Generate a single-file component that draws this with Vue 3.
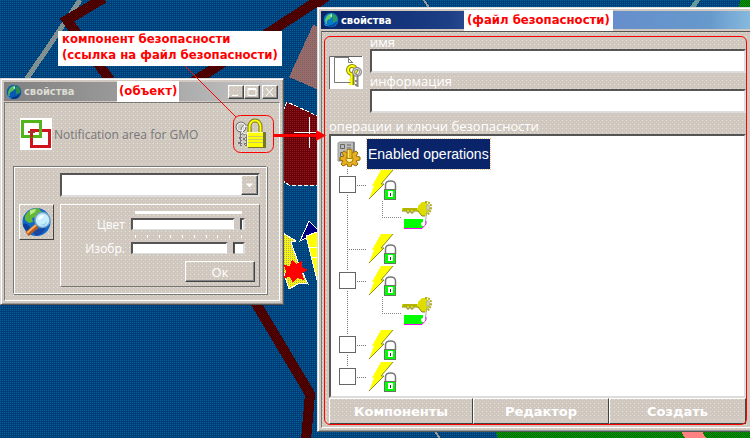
<script setup>
import { ref } from 'vue'

const color = ref(99)
const picture = ref(92)
const name = ref('')
const info = ref('')
const rows = [
  { check: true, child: true },
  { check: false, child: false },
  { check: true, child: true },
  { check: true, child: false },
  { check: true, child: false },
]
const ticks = 10
</script>

<template>
  <main class="desktop">
    <svg class="wallpaper" viewBox="0 0 750 438" preserveAspectRatio="xMinYMin slice" aria-hidden="true">
      <defs>
        <pattern id="p-red" width="2" height="2" patternUnits="userSpaceOnUse">
          <rect width="2" height="2" fill="#6c0008" /><rect width="1" height="1" fill="#8c2020" />
        </pattern>
        <pattern id="p-maroon" width="2" height="2" patternUnits="userSpaceOnUse">
          <rect width="2" height="2" fill="#330000" /><rect width="1" height="1" fill="#660000" /><rect x="1" y="1" width="1" height="1" fill="#660000" />
        </pattern>
        <pattern id="p-pink" width="2" height="2" patternUnits="userSpaceOnUse">
          <rect width="2" height="2" fill="#996c6c" /><rect width="1" height="1" fill="#806060" />
        </pattern>
        <pattern id="p-grey" width="2" height="2" patternUnits="userSpaceOnUse">
          <rect width="2" height="2" fill="#8c9494" /><rect width="1" height="1" fill="#669999" /><rect x="1" y="1" width="1" height="1" fill="#808080" />
        </pattern>
        <pattern id="p-green" width="2" height="2" patternUnits="userSpaceOnUse">
          <rect width="2" height="2" fill="#009900" /><rect width="1" height="1" fill="#006600" /><rect x="1" y="1" width="1" height="1" fill="#006600" />
        </pattern>
        <pattern id="p-yellow" width="2" height="2" patternUnits="userSpaceOnUse">
          <rect width="2" height="2" fill="#f4f410" /><rect width="1" height="1" fill="#b0b060" />
        </pattern>
      </defs>
      <g shape-rendering="crispEdges">
        <path d="M80 0 26 80" stroke="url(#p-grey)" stroke-width="5" fill="none" />
        <path d="M104 -2 67 20 110 80M322 -2 190 84M254 300 310 394 306 440" stroke="url(#p-maroon)" stroke-width="10" fill="none" />
        <path d="M313 25 330 30V95L289 77z" fill="url(#p-pink)" />
        <path d="M283 111 287 102 320 117V185H289L283 181z" fill="url(#p-red)" />
        <path d="M283 111 287 102 320 117M320 185H289L283 181" fill="none" stroke="#fff" stroke-dasharray="4 2" />
        <path d="M309 117V148M294 132H318" stroke="#fff" fill="none" />
        <path d="M317 0H330L320 7H317z" fill="url(#p-maroon)" />
        <path d="M424 0 429 8M434 430 441 440" stroke="#999" stroke-width="2" />
        <path d="M690 7 695 0H700L696 7z" fill="#669999" />
        <path d="M738 8 741 0H750V8zM495 430H750V438H498z" fill="url(#p-green)" />
        <path d="M680 430H701L706 438H685z" fill="#ff8080" />
        <path d="M283 233 296 241 291 242 299 265 308 284 300 283 289 289 283 270z" fill="url(#p-yellow)" stroke="#fff" />
        <path d="M300 241 309 221 320 232V237L306 238 300 241z" fill="#000080" stroke="#fff" />
        <path d="M306 236 320 231V280H317z" fill="#ff0" stroke="#fff" />
        <path d="M309 247H317M311 257H317" stroke="#fff" />
        <path d="M284 265 290 266 292 260 296 264 302 261 302 267 308 270 302 273 304 280 297 278 293 283 290 277 284 278 286 272z" fill="#f00" />
      </g>
    </svg>

    <section class="window object-window" aria-label="свойства объекта">
      <header class="title inactive">
        <svg class="globe" viewBox="0 0 16 16" aria-hidden="true">
          <circle cx="8" cy="8" r="7.3" fill="#0858b0" /><path d="M2 9c1-5 3-7 8-8-3 2 0 3-2 5s-3 1-4 3 1 3-1 3z" fill="#5b5" /><path d="M10 2c4 1 5 4 4 7-2 0-3 2-4 1s1-2 0-3-1-3 0-5z" fill="#2a8a50" /><path d="M3 13c4 1 8 0 11-4-1 5-6 8-11 4z" fill="#003080" /><path d="M1 13 4 8 2 14 7 13z" fill="#39d" /><path d="M7 4l2-2v3z" fill="#cef" />
        </svg>
        <h2>свойства</h2>
        <div class="caption-buttons">
          <button type="button" aria-label="Свернуть"><svg viewBox="0 0 14 12"><path d="M3 9.500H9" /></svg></button>
          <button type="button" aria-label="Развернуть"><svg viewBox="0 0 14 12"><path d="M3 2.500H11V9.500H3zM3 3.500H11" /></svg></button>
          <button type="button" class="close" aria-label="Закрыть"><svg viewBox="0 0 14 12"><path d="M3 2 10 10M10 2 3 10" /></svg></button>
        </div>
      </header>
      <div class="object-body">
        <div class="object-head">
          <svg class="squares" viewBox="0 0 32 32" aria-hidden="true">
            <rect width="32" height="32" fill="#fff" /><rect x="11.500" y="12.500" width="18" height="16" fill="none" stroke="#d1121d" stroke-width="3" /><rect x="2.500" y="3.500" width="18" height="15" fill="none" stroke="#53b51c" stroke-width="3" /><path d="M11.500 12V19.500" stroke="#b52418" stroke-width="3" /><path d="M8 14H15" stroke="#a33" stroke-width="2" />
          </svg>
          <span class="object-name">Notification area for GMO</span>
          <a class="security-link" href="#security" aria-label="Компонент безопасности">
            <svg viewBox="0 0 34 32" aria-hidden="true">
              <g fill="none" stroke="#777" stroke-width="2"><circle cx="8" cy="9" r="4.500" /><circle cx="13" cy="12" r="4.500" stroke="#888" /><path d="M8 14V28M6 20H9M5 25H8M13 16V28M10 21H13M11 26H15" /></g>
              <g fill="none" stroke="#fff"><circle cx="8" cy="9" r="4" /><circle cx="13" cy="12" r="4" /><path d="M8.500 14V27M12.500 17V27" stroke="#ddd" stroke-dasharray="2 1" /></g>
              <path d="M16.500 16V8.500a5.500 6 0 0 1 11 0v7.500" fill="none" stroke="#777720" stroke-width="4" /><path d="M16.500 16V8.500a5.500 6 0 0 1 11 0v7.500" fill="none" stroke="#ffff00" stroke-width="2" />
              <path d="M30 14h3v16H15v-2h15z" fill="#77772a" /><rect x="14" y="14" width="16" height="15" fill="#ff0" /><path d="M14 18.500H30M14 21.500H30M14 24.500H30" stroke="#cccc66" /><path d="M14 14.500H30M14.500 14V28" stroke="#ffffaa" />
            </svg>
          </a>
        </div>
        <div class="group">
          <div class="combo-frame">
            <select class="combo" aria-label="Компонент"><option></option></select>
            <svg class="combo-arrow" viewBox="0 0 16 19" aria-hidden="true"><path d="M4 8H12L8 12z" fill="#fff" /></svg>
          </div>
          <div class="group-row">
            <button type="button" class="browse" aria-label="Обзор">
              <svg viewBox="0 0 32 32" aria-hidden="true">
                <circle cx="15.500" cy="16" r="14" fill="#1268c8" /><path d="M4 10Q8 2 17 2l4 4-4 1-1 4-5 1 1 4-4 1-4-3z" fill="#62b832" /><path d="M9 4l6-1-1 3-5 3z" fill="#b8e890" /><path d="M2 18q3-2 7 3l-2 5q-5-4-5-8z" fill="#0b3f98" /><path d="M11 25l14-4q-3 8-10 9z" fill="#1748a5" /><path d="M6 28 16 20" stroke="#b65822" stroke-width="5" /><path d="M6 27 15 19" stroke="#ffae62" stroke-width="2" /><circle cx="21.500" cy="14" r="7.500" fill="#c5efff" stroke="#77a5cc" stroke-width="1.500" /><path d="M17 14q0-5 6-5-1 4-6 5z" fill="#fff" /><path d="M18 18q5 2 8-3-1 7-8 3z" fill="#8fc8f0" />
              </svg>
            </button>
            <form class="settings" @submit.prevent>
              <div class="white-line"></div>
              <div class="slider-row">
                <label for="color">Цвет</label><input id="color" v-model="color" type="range" min="0" max="100" />
              </div>
              <div class="ticks" aria-hidden="true"><i v-for="n in ticks" :key="n"></i></div>
              <div class="slider-row">
                <label for="picture">Изобр.</label><input id="picture" v-model="picture" type="range" min="0" max="100" />
              </div>
              <button type="submit" class="ok">Ок</button>
            </form>
          </div>
        </div>
      </div>
    </section>

    <section id="security" class="window security-window" aria-label="свойства файла безопасности">
      <header class="title active">
        <svg class="globe" viewBox="0 0 16 16" aria-hidden="true">
          <circle cx="8" cy="8" r="7.300" fill="#0878c8" /><path d="M2 9c1-5 3-7 8-8-3 2 0 3-2 5s-3 1-4 3 1 3-1 3z" fill="#6c6" /><path d="M10 2c4 1 5 4 4 7-2 0-3 2-4 1s1-2 0-3-1-3 0-5z" fill="#2a9a60" /><path d="M3 13c4 1 8 0 11-4-1 5-6 8-11 4z" fill="#0048a0" /><path d="M1 13 4 8 2 14 7 13z" fill="#39d" /><path d="M7 4l2-2v3z" fill="#cef" />
        </svg>
        <h2>свойства</h2>
      </header>
      <div class="security-body">
        <div class="file-head">
          <svg class="file-icon" viewBox="0 0 34 33" aria-hidden="true">
            <rect width="34" height="33" fill="#fff" /><path d="M.5 33V.5H33" fill="none" stroke="#666" />
            <path d="M20 1.500H5.500V26.500H22M19.500 1V6.500H23M19 2 24 7" fill="none" stroke="#777" />
            <g fill="none"><circle cx="23" cy="14" r="4" stroke="#8a8a00" stroke-width="4" /><circle cx="23" cy="14" r="4" stroke="#ff0" stroke-width="2" /><path d="M23.500 18V29" stroke="#8a8a00" stroke-width="4" /><path d="M22.500 18V29M20 24H23M20 28H23" stroke="#ff0" stroke-width="2" /><circle cx="28" cy="16" r="3.500" stroke="#888" stroke-width="3" /><circle cx="28" cy="16" r="3.500" stroke="#ddd" /><path d="M28.500 19V31M26 25H28M26 29H28" stroke="#888" stroke-width="2" /></g>
          </svg>
          <div class="fields">
            <label for="name">имя</label><input id="name" v-model="name" type="text" />
            <label for="info">информация</label><input id="info" v-model="info" type="text" />
          </div>
        </div>
        <h3>операции и ключи безопасности</h3>
        <div class="tree">
          <div class="root-row">
            <svg class="gear" viewBox="0 0 24 26" aria-hidden="true">
              <path d="M1 2 3 1H17V20H1z" fill="#bbb" stroke="#999" /><path d="M17 1V20M2 19H17" stroke="#555" /><path d="M3.500 3.500H7.500V7.500H3.500zM3.500 11.500H7.500V15.500H3.500zM10 4H14M10 7H14" fill="none" stroke="#666" />
              <path d="M11 9h3l1 3 4-2 2 2-2 3 4 1v3l-4 1 2 3-2 2-4-2-1 3h-3l-1-3-4 2-2-2 2-3-3-1v-3l4-1-2-3 2-2 3 2z" fill="#e5b01c" stroke="#986810" /><circle cx="12.500" cy="18" r="3.500" fill="#fff1a5" stroke="#a87810" /><path d="M10 8.500h5v9h-5z" fill="#e8b820" stroke="#b08010" /><path d="M11.500 9V17" stroke="#ffe878" />
            </svg>
            <span class="selected">Enabled operations</span>
          </div>
          <ul>
            <li v-for="(row, i) in rows" :key="i" :class="{ tall: row.child }">
              <div class="operation">
                <span class="joint"><input v-if="row.check" type="checkbox" :aria-label="'Операция ' + (i + 1)" /></span>
                <svg class="bolt-lock" viewBox="0 0 30 32" aria-hidden="true">
                  <path d="M14 1H26L14 15H17L2 30 7 17H5z" fill="#ff0" /><path d="M26 1 14 15H17L2 30" fill="none" stroke="#8a8a20" />
                  <path d="M18.500 21V16q0-4 5-4t5 4v5" fill="#fff" stroke="#777" stroke-width="1.500" />
                  <g shape-rendering="crispEdges"><rect x="17.500" y="20.500" width="11" height="10" fill="#0f0" stroke="#667766" /><rect x="21" y="22" width="5" height="6" fill="#fff" /><path d="M23.500 24V27" stroke="#333" /></g>
                </svg>
              </div>
              <div v-if="row.child" class="child">
                <svg class="key-tag" viewBox="0 0 30 32" aria-hidden="true">
                  <path d="M0 7H16V5l4-4h4l4 5v3l-4 6h-4l-4-5H0z" fill="#dddd00" /><path d="M0 10H5V12H7V10H9V12H11V10H16L20 15H23M1 8H15" fill="none" stroke="#888800" /><path d="M23 1q6 0 6 5t-4 8" fill="none" stroke="#aaaa20" stroke-width="2" stroke-dasharray="2 1" /><path d="M25 4V9h2V4zM25 10 23 23" fill="#eee" stroke="#aaa" />
                  <rect x="2" y="18" width="19" height="9" fill="#0f0" /><path d="M2 27.500H20L24 23V20" fill="none" stroke="#f0f" /><circle cx="21" cy="23" r="2" fill="#fff" />
                </svg>
              </div>
            </li>
          </ul>
        </div>
        <div class="actions">
          <button type="button">Компоненты</button><button type="button">Редактор</button><button type="button">Создать</button>
        </div>
      </div>
    </section>

    <p class="note note-component">компонент безопасности<br />(ссылка на файл безопасности)</p>
    <p class="note note-object">(объект)</p>
    <p class="note note-file">(файл безопасности)</p>
    <svg class="pointer" width="326" height="160" viewBox="0 0 326 160" aria-hidden="true">
      <path d="M185 66 236 117" stroke="#f00" fill="none" />
      <rect x="233.500" y="115.500" width="40" height="37" rx="7" fill="none" stroke="#f00" />
      <path d="M274 134H316V130L326 135.500 316 141V137H274z" fill="#f00" />
    </svg>
    <div class="file-outline"></div>
  </main>
</template>

<style>
body { margin: 0; }
</style>

<style scoped>
* { box-sizing: border-box; }
.desktop {
  position: relative;
  min-height: 100vh;
  overflow: hidden;
  font-family: "Liberation Sans", sans-serif;
  background: conic-gradient(from 270deg at 1px 1px, #006699 90deg, #003c78 0) 0 0 / 2px 2px;
}
.wallpaper { position: absolute; inset: 0; width: 100%; height: 100%; }
.window, .browse, .ok, .actions button, .caption-buttons button, .combo-arrow {
  background:
    conic-gradient(from 270deg at 1px 1px, #ebe6c8 90deg, transparent 0) 0 0 / 4px 4px,
    conic-gradient(from 270deg at 1px 1px, #e4c8c4 90deg, transparent 0) 2px 2px / 4px 4px,
    #cfc8c1;
}
.window { position: absolute; border: 1px solid; border-color: #ddd #555 #555 #ddd; box-shadow: inset 1px 1px #fff, inset -1px -1px #999; }
.object-window { left: 0; top: 78px; width: 284px; padding: 3px; }
.security-window { left: 317px; right: -6px; top: 7px; padding: 3px; border-left-color: #ddd; }
.title { display: flex; align-items: center; gap: 2px; height: 18px; padding: 0 2px; }
.object-window .title { height: 19px; }
.inactive { background: linear-gradient(90deg, #808080, #999 40%, #c8c8c8); color: #dcdcd4; }
.active { background: linear-gradient(90deg, #0a246a, #1c3f85 30%, #6688cc 55%, #6699cc 90%, #88bbdd); color: #fff; }
.globe { width: 16px; height: 16px; }
h2 { margin: 0; font: bold 11px "DejaVu Sans Condensed", "DejaVu Sans", sans-serif; }
.caption-buttons { display: flex; margin-left: auto; }
.caption-buttons button { width: 16px; height: 14px; padding: 0; border: 1px solid; border-color: #fff #444 #444 #fff; box-shadow: inset -1px -1px #888; }
.caption-buttons .close { margin-left: 2px; }
.caption-buttons svg { display: block; width: 14px; height: 12px; fill: none; stroke: #fff; stroke-width: 1; }
.object-body { margin-top: 1px; padding: 14px 12px 6px 8px; border: 1px solid; border-color: #777 #fff #fff #777; }
.object-head { display: flex; align-items: center; height: 34px; padding-left: 7px; }
.squares { width: 32px; height: 32px; }
.object-name { margin-left: 2px; color: #777; font: 12px "Open Sans", sans-serif; white-space: nowrap; }
.security-link { margin-left: auto; }
.security-link svg { display: block; width: 34px; height: 32px; }
.group { margin-top: 15px; padding: 6px 6px 6px 5px; border: 1px solid; border-color: #777 #fff #fff #777; box-shadow: inset 1px 1px #fff, 1px 1px #777; }
.combo-frame { display: grid; margin-left: 41px; }
.combo { grid-area: 1 / 1; width: 100%; height: 24px; padding: 0 20px 0 4px; appearance: none; border: 2px solid; border-color: #555 #ddd #ddd #555; border-radius: 0; background: #fff; }
.combo-arrow { grid-area: 1 / 1; place-self: center end; width: 17px; height: 20px; margin-right: 2px; border: 1px solid; border-color: #fff #444 #444 #fff; box-shadow: inset -1px -1px #888; pointer-events: none; }
.group-row { display: flex; gap: 6px; margin-top: 7px; }
.browse { flex: none; width: 35px; height: 36px; padding: 1px; border: 1px solid; border-color: #fff #444 #444 #fff; }
.browse svg { display: block; width: 32px; height: 32px; }
.settings { flex: 1; padding: 6px 14px 4px 10px; border: 1px solid; border-color: #fff #777 #777 #fff; }
.white-line { height: 3px; margin: 0 3px 0 64px; background: #fff; }
.slider-row { display: flex; align-items: center; justify-content: flex-end; gap: 6px; height: 20px; color: #fff; }
.slider-row label { font: 12px "Open Sans", sans-serif; }
.slider-row input {
  width: 114px; height: 12px; margin: 0; appearance: none; background: #fff;
  border: 2px solid; border-color: #555 #ddd #ddd #555; border-bottom-width: 1px;
}
.slider-row input::-webkit-slider-thumb {
  appearance: none; width: 9px; height: 14px; margin-top: -4px;
  background: linear-gradient(90deg, #fff 0 1px, #d0c8c4 1px 7px, #444 7px); clip-path: polygon(0 30%, 50% 0, 100% 30%, 100% 100%, 0 100%);
}
.ticks { display: flex; justify-content: space-between; height: 3px; margin: 1px 3px 0 64px; }
.ticks i { width: 1px; background: #fff; }
.ok { display: block; width: 70px; height: 21px; margin: 3px -10px 0 auto; padding: 0; border: 1px solid; border-color: #fff #444 #444 #fff; box-shadow: inset -1px -1px #888; color: #fff; font: 13px "Open Sans", sans-serif; }
.security-body { margin-top: 2px; padding: 5px 5px 3px 7px; border: 1px solid; border-color: #555 #fff #fff #777; }
.file-head { display: flex; gap: 7px; }
.file-icon { flex: none; width: 34px; height: 33px; margin-top: 19px; }
.fields { flex: 1; display: flex; flex-direction: column; }
.fields label, h3 { color: #fff; font: 13px/16px "Open Sans", sans-serif; }
.fields label { height: 12px; line-height: 10px; }
.fields label:nth-of-type(2) { height: 16px; line-height: 16px; }
.fields input { width: 100%; height: 24px; border: 2px solid; border-color: #555 #ddd #ddd #555; border-radius: 0; background: #fff; }
h3 { margin: 6px 0 0; height: 15px; font-weight: 400; line-height: 14px; }
.tree { height: 264px; padding: 2px 0 0 6px; border: 2px solid; border-color: #555 #ddd #ddd #555; background: #fff; }
.root-row { display: flex; align-items: center; height: 31px; }
.gear { width: 24px; height: 26px; }
.selected { margin-left: 6px; padding: 0 1px; background: #0a246a; outline: 1px dotted #e8c890; color: #fff; font: 14px/30px "Liberation Sans", sans-serif; }
ul { margin: 0; padding: 0; list-style: none; }
li { height: 32px; background: repeating-linear-gradient(#777 0 1px, transparent 1px 2px) 10px 0 / 1px 100% no-repeat; }
li.tall { height: 64px; }
li:last-child { background-size: 1px 16px; }
.operation { display: flex; height: 32px; }
.joint { width: 30px; height: 32px; padding: 7px 0 0 2px; background: repeating-linear-gradient(90deg, #777 0 1px, transparent 1px 2px) 10px 16px / 19px 1px no-repeat; }
.joint input { display: block; width: 17px; height: 17px; margin: 0; appearance: none; border: 1px solid #666; background: #fff; box-shadow: 0 0 0 1px #fff; }
.bolt-lock { width: 30px; height: 32px; }
.child {
  display: flex; height: 32px; padding-left: 65px;
  background:
    repeating-linear-gradient(#888 0 1px, transparent 1px 2px) 45px 0 / 1px 16px no-repeat,
    repeating-linear-gradient(90deg, #888 0 1px, transparent 1px 2px) 45px 16px / 19px 1px no-repeat;
}
.key-tag { width: 30px; height: 32px; }
.actions { display: grid; grid-template-columns: 144fr 136fr 137fr; }
.actions button { height: 26px; padding: 0; border: 1px solid; border-color: #fff #444 #444 #fff; color: #fff; font: bold 13px "DejaVu Sans", sans-serif; }
.note { position: absolute; margin: 0; background: #fff; color: #f00; font: bold 13px/16px "DejaVu Sans Condensed", "DejaVu Sans", sans-serif; white-space: nowrap; }
.note-component { left: 58px; top: 31px; padding: 0 4px 3px; }
.note-object { left: 117px; top: 81px; padding: 2px 2px 3px; }
.note-file { left: 464px; top: 10px; padding: 2px 3px 3px; }
.pointer { position: absolute; left: 0; top: 0; pointer-events: none; }
.file-outline { position: absolute; left: 324px; right: 3px; top: 36px; height: 389px; border: 1px solid #f00; border-radius: 6px; pointer-events: none; }
</style>
